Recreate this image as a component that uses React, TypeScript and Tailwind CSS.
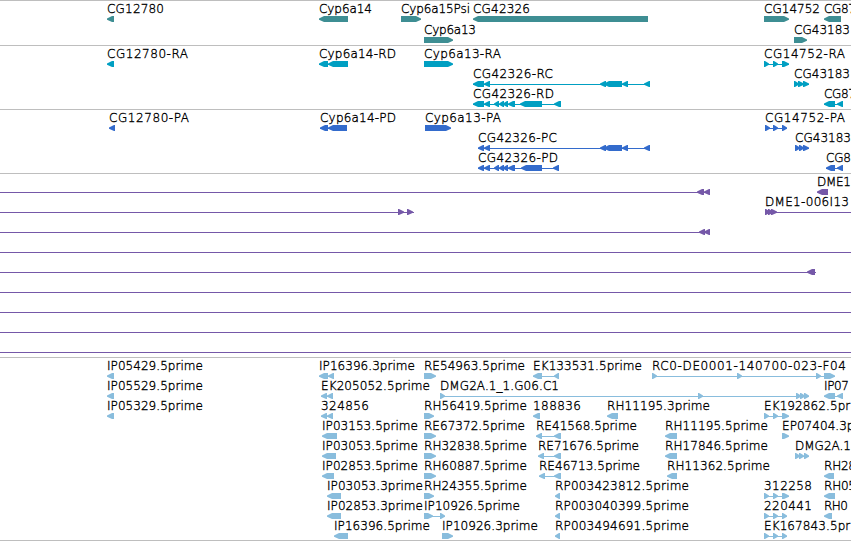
type Dir = "left" | "right";
type Span = [number, number];

interface Feature {
  row: number;
  dir?: Dir;
  label?: string;
  // drawn width of the label
  width?: number;
  exons?: Span[];
  // intron line, defaults to the extent of the exons
  line?: Span;
}

interface TrackData {
  name: string;
  size: string;
  fill: string;
  pitch: number;
  features: Feature[];
}

const f = (
  row: number,
  dir: Dir,
  label: string,
  width: number,
  ...exons: Span[]
): Feature => ({ row, dir, label, width, exons });

const tracks: TrackData[] = [
  {
    name: "genes",
    size: "h-[45px]",
    fill: "fill-[#3e8e93]",
    pitch: 21,
    features: [
      f(0, "left", "CG12780", 57, [107, 114]),
      f(0, "left", "Cyp6a14", 53, [319, 348]),
      f(0, "right", "Cyp6a15Psi", 69, [401, 421]),
      f(0, "left", "CG42326", 57, [473, 648]),
      f(0, "right", "CG14752", 56, [764, 789]),
      f(0, "left", "CG87", 32, [824, 841]),
      f(1, "right", "Cyp6a13", 52, [424, 453]),
      f(1, "right", "CG43183", 56, [794, 807]),
    ],
  },
  {
    name: "transcripts",
    size: "h-16",
    fill: "fill-[#009fc2]",
    pitch: 20,
    features: [
      f(0, "left", "CG12780-RA", 81, [107, 114]),
      f(0, "left", "Cyp6a14-RD", 77, [319, 328], [328, 348]),
      f(0, "right", "Cyp6a13-RA", 77, [424, 453]),
      f(0, "right", "CG14752-RA", 81, [764, 769], [773, 778], [782, 789]),
      f(1, "left", "CG42326-RC", 80, [473, 484], [484, 490], [600, 606], [604, 622], [622, 628], [644, 650]),
      f(1, "right", "CG43183", 56, [794, 799], [798, 804], [803, 809]),
      f(2, "left", "CG42326-RD", 81, [473, 484], [484, 490], [494, 499], [499, 504], [503, 508], [508, 515], [520, 542], [554, 561]),
      f(2, "left", "CG87", 32, [824, 835], [837, 843]),
    ],
  },
  {
    name: "cds",
    size: "h-16",
    fill: "fill-[#336bcc]",
    pitch: 20,
    features: [
      f(0, "left", "CG12780-PA", 80, [109, 115]),
      f(0, "left", "Cyp6a14-PD", 76, [320, 328], [328, 347]),
      f(0, "right", "Cyp6a13-PA", 76, [425, 451]),
      f(0, "right", "CG14752-PA", 80, [765, 770], [773, 778], [782, 787]),
      f(1, "left", "CG42326-PC", 79, [478, 484], [484, 490], [600, 606], [604, 622], [622, 628], [644, 650]),
      f(1, "right", "CG43183", 56, [795, 800], [799, 804], [803, 809]),
      f(2, "left", "CG42326-PD", 80, [478, 484], [484, 490], [494, 499], [499, 504], [503, 508], [508, 515], [521, 542], [553, 559]),
      f(2, "left", "CG8", 25, [826, 835], [837, 843]),
    ],
  },
  {
    name: "bacs",
    size: "h-[184px]",
    fill: "fill-[#7558a8]",
    pitch: 20,
    features: [
      { row: 0, dir: "left", exons: [[697, 704], [704, 710]], line: [0, 710] },
      f(0, "left", "DME1", 34, [817, 828]),
      { row: 1, dir: "right", exons: [[398, 404], [407, 413]], line: [0, 414] },
      {
        row: 1,
        dir: "right",
        label: "DME1-006I13",
        width: 84,
        exons: [[765, 770], [768, 773], [771, 777]],
        line: [765, 851],
      },
      { row: 2, dir: "left", exons: [[699, 705], [704, 710]], line: [0, 710] },
      { row: 3, line: [0, 851] },
      { row: 4, dir: "left", exons: [[807, 815]], line: [0, 816] },
      { row: 5, line: [0, 851] },
      { row: 6, line: [0, 851] },
      { row: 7, line: [0, 851] },
      { row: 8, line: [0, 851] },
    ],
  },
  {
    name: "ests",
    size: "h-[183px]",
    fill: "fill-[#89bddd]",
    pitch: 20,
    features: [
      f(0, "left", "IP05429.5prime", 96, [107, 114]),
      f(0, "left", "IP16396.3prime", 96, [319, 328], [328, 334]),
      f(0, "right", "RE54963.5prime", 101, [424, 436]),
      f(0, "left", "EK133531.5prime", 109, [533, 542], [554, 559]),
      f(0, "right", "RC0-DE0001-140700-023-F04", 194, [652, 657], [737, 742], [816, 821], [824, 835]),
      f(1, "left", "IP05529.5prime", 96, [107, 114]),
      f(1, "left", "EK205052.5prime", 109, [321, 327], [327, 333]),
      f(1, "right", "DMG2A.1_1.G06.C1", 119, [440, 445], [698, 703], [796, 801], [800, 805], [804, 809]),
      f(1, "left", "IP07", 25, [824, 835], [837, 843]),
      f(2, "left", "IP05329.5prime", 96, [107, 114]),
      f(2, "left", "324856", 48, [321, 327], [327, 333]),
      f(2, "right", "RH56419.5prime", 103, [424, 434]),
      f(2, "left", "188836", 48, [533, 540]),
      f(2, "left", "RH11195.3prime", 103, [607, 618]),
      f(2, "right", "EK192862.5prime", 109, [764, 769], [773, 778], [782, 789]),
      f(3, "left", "IP03153.5prime", 96, [322, 337]),
      f(3, "right", "RE67372.5prime", 101, [424, 436]),
      f(3, "left", "RE41568.5prime", 101, [536, 542], [554, 561]),
      f(3, "left", "RH11195.5prime", 103, [665, 677]),
      f(3, "right", "EP07404.3prime", 100, [782, 789]),
      f(4, "left", "IP03053.5prime", 96, [322, 336]),
      f(4, "right", "RH32838.5prime", 103, [424, 436]),
      f(4, "left", "RE71676.5prime", 101, [538, 544], [554, 561]),
      f(4, "left", "RH17846.5prime", 103, [665, 677]),
      f(4, "right", "DMG2A.1", 56, [795, 800], [799, 804], [804, 809]),
      f(5, "left", "IP02853.5prime", 96, [322, 334]),
      f(5, "right", "RH60887.5prime", 103, [424, 436]),
      f(5, "left", "RE46713.5prime", 101, [539, 545], [554, 561]),
      f(5, "left", "RH11362.5prime", 103, [667, 677]),
      f(5, "left", "RH28", 32, [824, 834]),
      f(6, "left", "IP03053.3prime", 96, [327, 341]),
      f(6, "right", "RH24355.5prime", 103, [424, 434]),
      f(6, "left", "RP003423812.5prime", 134, [555, 560]),
      f(6, "right", "312258", 48, [764, 769], [773, 778], [782, 789]),
      f(6, "left", "RH05", 32, [824, 835]),
      f(7, "left", "IP02853.3prime", 96, [327, 341]),
      f(7, "right", "IP10926.5prime", 96, [424, 433], [440, 445]),
      f(7, "left", "RP003040399.5prime", 134, [555, 560]),
      f(7, "right", "220441", 48, [764, 769], [773, 778], [782, 787]),
      f(7, "left", "RH0", 24, [824, 832]),
      f(8, "left", "IP16396.5prime", 96, [334, 348]),
      f(8, "right", "IP10926.3prime", 96, [442, 453]),
      f(8, "left", "RP003494691.5prime", 134, [555, 560]),
      f(8, "right", "EK167843.5prime", 109, [764, 769], [773, 778], [782, 787]),
    ],
  },
];

// block with a blunt pointed end, 6px tall
function exonPath([start, end]: Span, dir: Dir, y: number) {
  const head = Math.min(5, end - start - 1);
  return dir === "left"
    ? `M${start} ${y + 2.5}L${start + head} ${y}H${end}V${y + 6}H${start + head}L${start} ${y + 3.8}Z`
    : `M${end} ${y + 2.5}L${end - head} ${y}H${start}V${y + 6}H${end - head}L${end} ${y + 3.8}Z`;
}

function Glyph({ feature, pitch }: { feature: Feature; pitch: number }) {
  const { row, dir = "right", label, width, exons = [], line } = feature;
  const top = row * pitch;
  const from = line ? line[0] : exons[0][0];
  const to = line ? line[1] : exons[exons.length - 1][1];
  return (
    <g>
      {(line || exons.length > 1) && (
        <rect x={from} y={top + 18} width={to - from} height={1} shapeRendering="crispEdges" />
      )}
      {exons.map((exon) => (
        <path key={exon[0]} d={exonPath(exon, dir, top + 15)} />
      ))}
      {label && (
        <text
          x={exons[0][0]}
          y={top + 12}
          textLength={width}
          className="fill-black stroke-black stroke-[0.35px] text-[12px] font-extralight"
        >
          {label}
        </text>
      )}
    </g>
  );
}

function Track({ track }: { track: TrackData }) {
  return (
    <section className={`overflow-hidden border-t border-[#bebebe] ${track.size}`}>
      <svg className={`block h-full w-full ${track.fill}`} aria-label={track.name}>
        {track.features.map((feature, index) => (
          <Glyph key={index} feature={feature} pitch={track.pitch} />
        ))}
      </svg>
    </section>
  );
}

export default function App() {
  return (
    <main className="flex h-[541px] w-[851px] flex-col overflow-hidden border-b border-[#bebebe] bg-white font-['DejaVu_Sans',sans-serif]">
      {tracks.map((track) => (
        <Track key={track.name} track={track} />
      ))}
    </main>
  );
}
